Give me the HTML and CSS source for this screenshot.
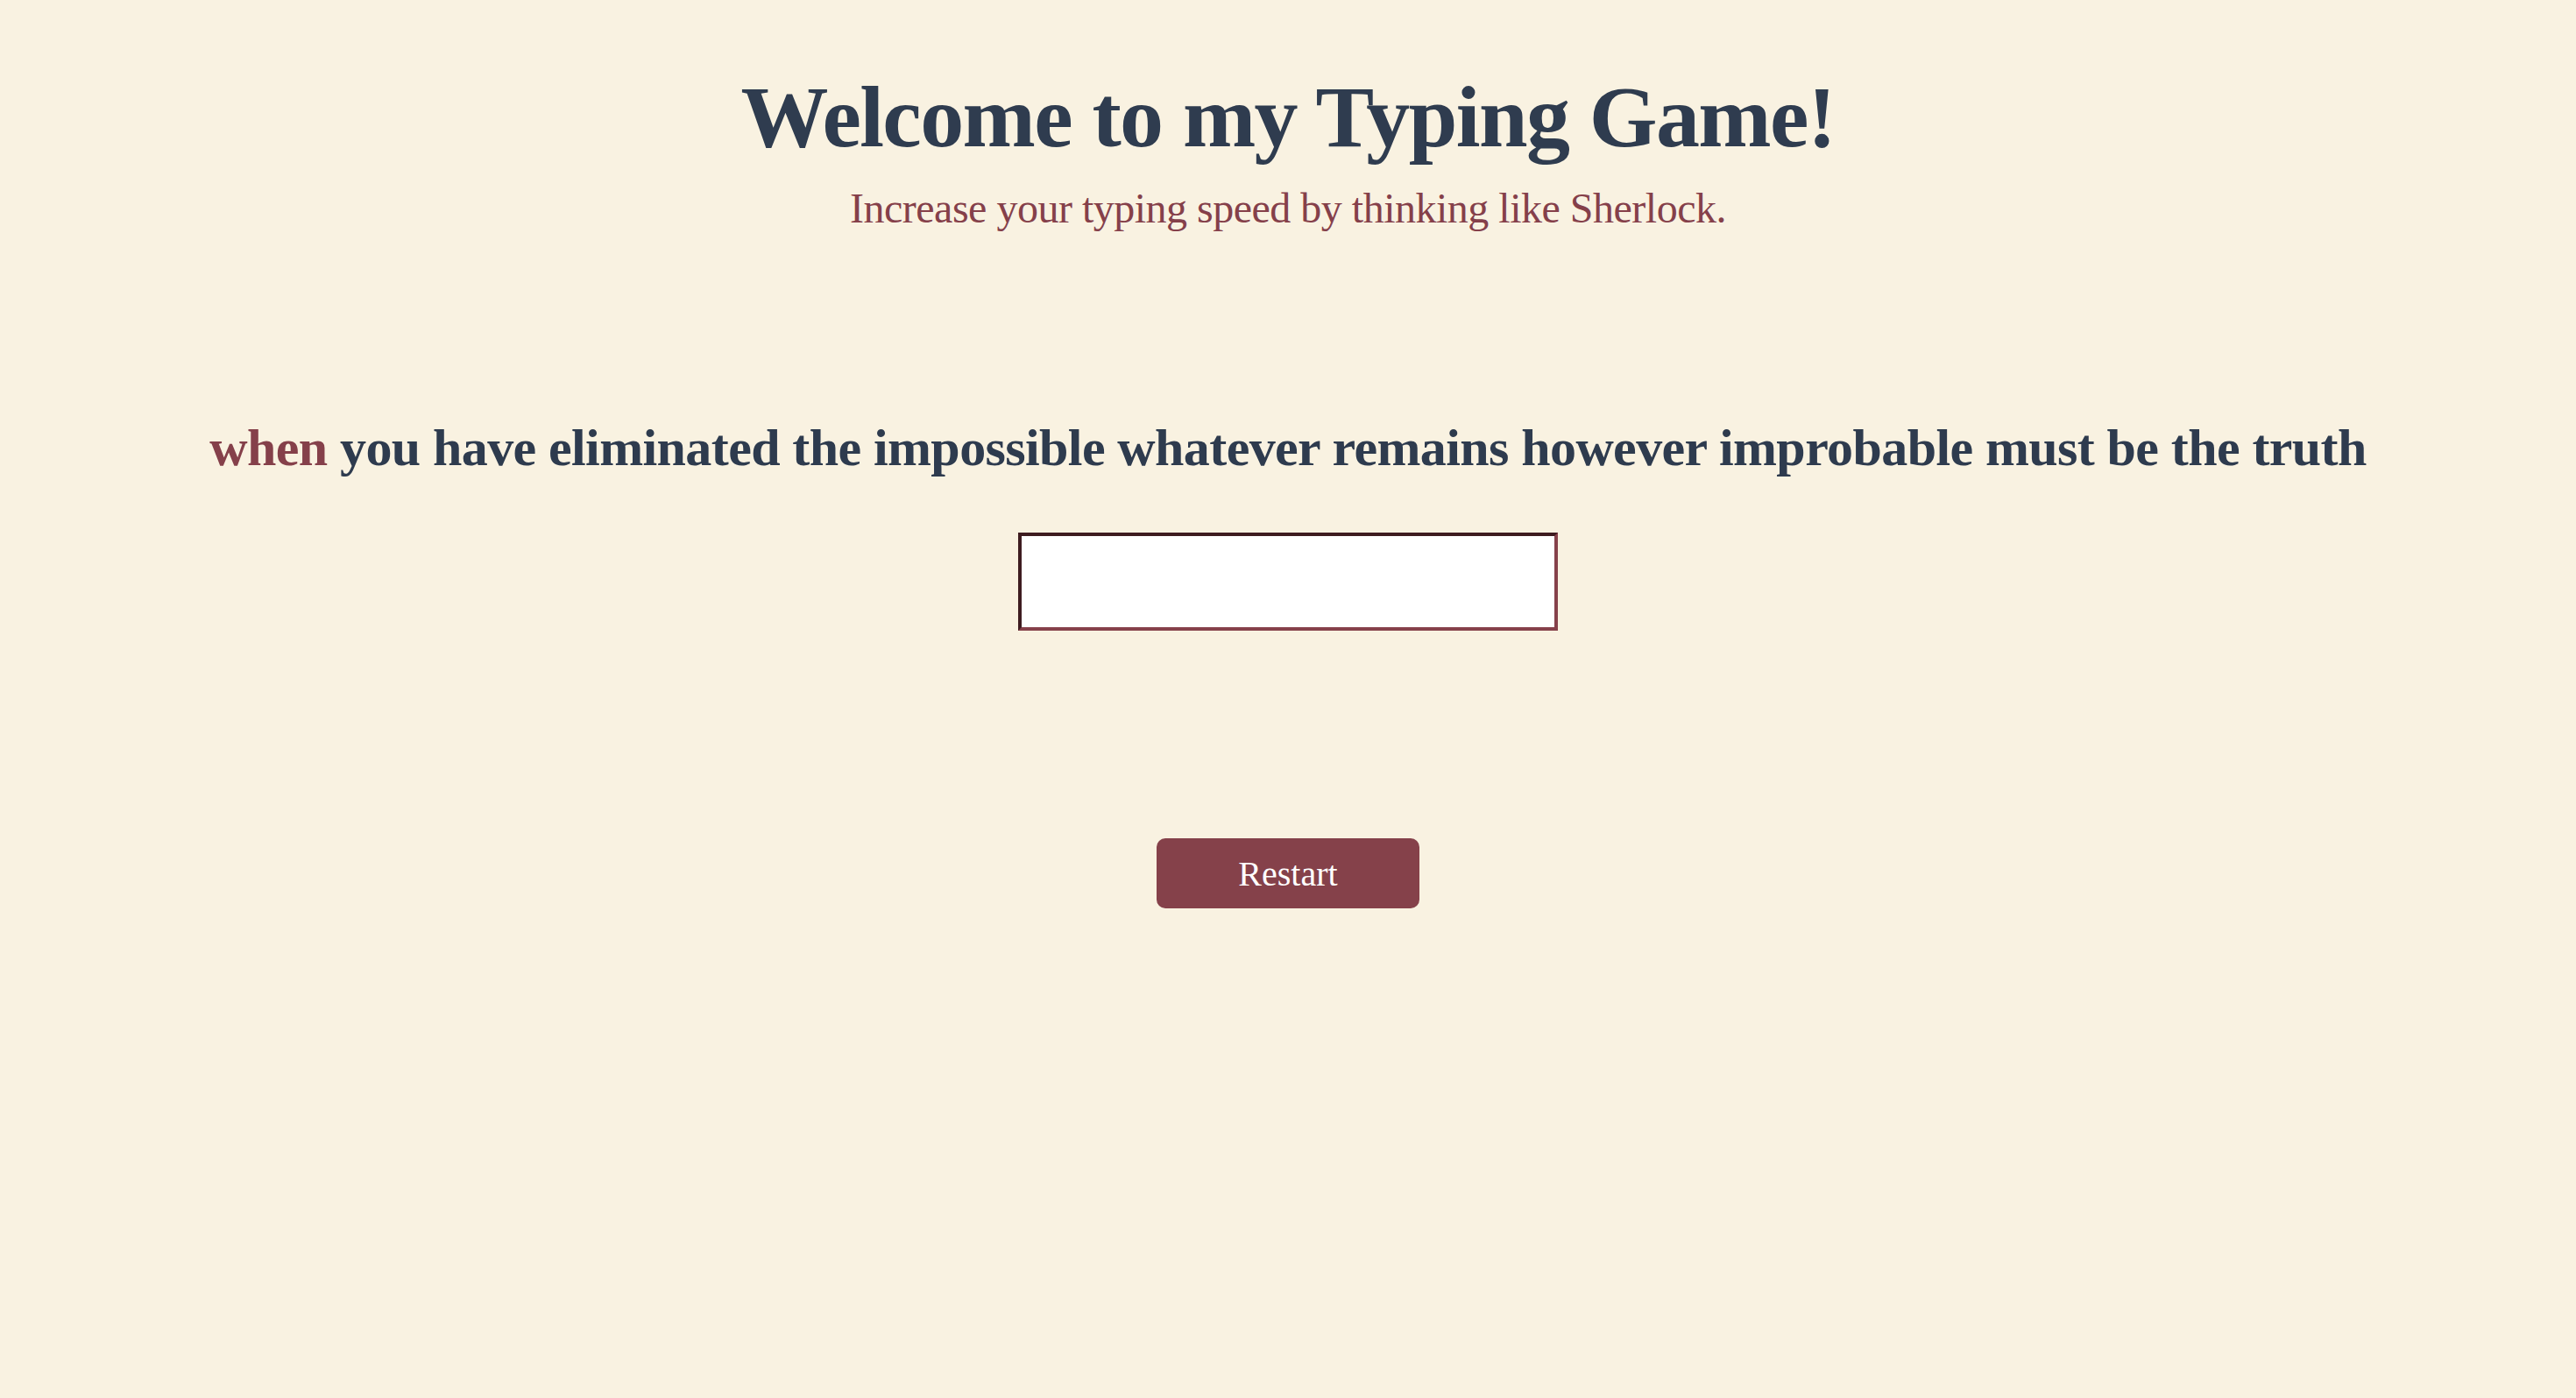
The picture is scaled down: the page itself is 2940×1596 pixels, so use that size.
FILE: index.html
```html
<!DOCTYPE html>
<html lang="en">
<head>
<meta charset="utf-8">
<title>Typing Game</title>
<link rel="stylesheet" href="styles.css">
</head>
<body>
<main class="game">
  <header class="intro">
    <h1 class="title">Welcome to my Typing Game!</h1>
    <p class="subtitle">Increase your typing speed by thinking like Sherlock.</p>
  </header>
  <p class="quote"><span class="current">when</span> you have eliminated the impossible whatever remains however improbable must be the truth</p>
  <input class="typed" type="text" aria-label="Type here">
  <button class="restart" type="button">Restart</button>
</main>
</body>
</html>
```
FILE: styles.css
```css
html, body {
  margin: 0;
  padding: 0;
  background: #f9f2e1;
}
body {
  font-family: "Liberation Serif", "Times New Roman", serif;
  min-height: 100vh;
}
.game {
  display: flex;
  flex-direction: column;
  align-items: center;
}
.intro {
  display: flex;
  flex-direction: column;
  align-items: center;
  padding-top: 74px;
}
.title {
  margin: 0;
  font-size: 100px;
  line-height: 120px;
  font-weight: 700;
  letter-spacing: -1.6px;
  color: #2f3c4f;
}
.subtitle {
  margin: 15px 0 0;
  font-size: 48px;
  line-height: 58px;
  letter-spacing: -0.5px;
  color: #85404a;
}
.quote {
  margin: 208px 0 0;
  font-size: 60px;
  line-height: 72px;
  font-weight: 700;
  letter-spacing: -0.6px;
  color: #2e3b4e;
  white-space: nowrap;
}
.current {
  color: #85404a;
}
.typed {
  margin-top: 61px;
  box-sizing: border-box;
  width: 616px;
  height: 112px;
  background: #ffffff;
  border-style: solid;
  border-width: 4px;
  border-color: #3e1c20 #86414a #86414a #3e1c20;
  font-family: inherit;
  font-size: 48px;
  padding: 0 16px;
  outline: none;
}
.restart {
  margin-top: 237px;
  width: 300px;
  height: 80px;
  border: none;
  border-radius: 10px;
  background: #85414a;
  color: #ffffff;
  font-family: inherit;
  font-size: 40px;
  cursor: pointer;
}
```
